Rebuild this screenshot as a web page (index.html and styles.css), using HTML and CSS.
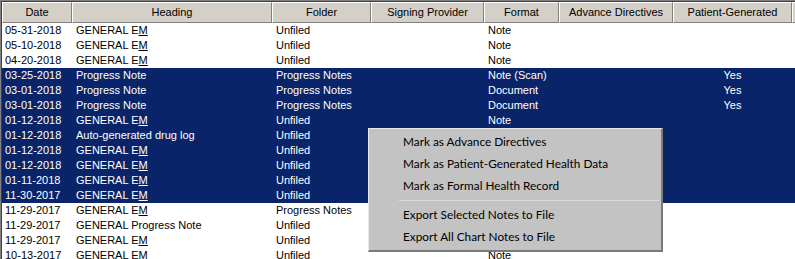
FILE: index.html
```html
<!DOCTYPE html>
<html lang="en">
<head>
    <meta charset="UTF-8">
    <title>Chart Notes</title>
    <link rel="stylesheet" href="styles.css">
</head>
<body>

    <div class="notes-list">
        <div class="row header">
            <div class="cell">Date</div>
            <div class="cell">Heading</div>
            <div class="cell">Folder</div>
            <div class="cell">Signing Provider</div>
            <div class="cell">Format</div>
            <div class="cell">Advance Directives</div>
            <div class="cell">Patient-Generated</div>
            <div class="cell filler"></div>
        </div>

        <div class="row"><div class="cell">05-31-2018</div><div class="cell">GENERAL E<u>M</u></div><div class="cell">Unfiled</div><div class="cell"></div><div class="cell">Note</div><div class="cell"></div><div class="cell yes"></div></div>
        <div class="row"><div class="cell">05-10-2018</div><div class="cell">GENERAL E<u>M</u></div><div class="cell">Unfiled</div><div class="cell"></div><div class="cell">Note</div><div class="cell"></div><div class="cell yes"></div></div>
        <div class="row"><div class="cell">04-20-2018</div><div class="cell">GENERAL E<u>M</u></div><div class="cell">Unfiled</div><div class="cell"></div><div class="cell">Note</div><div class="cell"></div><div class="cell yes"></div></div>
        <div class="row selected"><div class="cell">03-25-2018</div><div class="cell">Progress Note</div><div class="cell">Progress Notes</div><div class="cell"></div><div class="cell">Note (Scan)</div><div class="cell"></div><div class="cell yes">Yes</div></div>
        <div class="row selected"><div class="cell">03-01-2018</div><div class="cell">Progress Note</div><div class="cell">Progress Notes</div><div class="cell"></div><div class="cell">Document</div><div class="cell"></div><div class="cell yes">Yes</div></div>
        <div class="row selected"><div class="cell">03-01-2018</div><div class="cell">Progress Note</div><div class="cell">Progress Notes</div><div class="cell"></div><div class="cell">Document</div><div class="cell"></div><div class="cell yes">Yes</div></div>
        <div class="row selected"><div class="cell">01-12-2018</div><div class="cell">GENERAL E<u>M</u></div><div class="cell">Unfiled</div><div class="cell"></div><div class="cell">Note</div><div class="cell"></div><div class="cell yes"></div></div>
        <div class="row selected"><div class="cell">01-12-2018</div><div class="cell">Auto-generated drug log</div><div class="cell">Unfiled</div><div class="cell"></div><div class="cell"></div><div class="cell"></div><div class="cell yes"></div></div>
        <div class="row selected"><div class="cell">01-12-2018</div><div class="cell">GENERAL E<u>M</u></div><div class="cell">Unfiled</div><div class="cell"></div><div class="cell"></div><div class="cell"></div><div class="cell yes"></div></div>
        <div class="row selected"><div class="cell">01-12-2018</div><div class="cell">GENERAL E<u>M</u></div><div class="cell">Unfiled</div><div class="cell"></div><div class="cell"></div><div class="cell"></div><div class="cell yes"></div></div>
        <div class="row selected"><div class="cell">01-11-2018</div><div class="cell">GENERAL E<u>M</u></div><div class="cell">Unfiled</div><div class="cell"></div><div class="cell"></div><div class="cell"></div><div class="cell yes"></div></div>
        <div class="row selected"><div class="cell">11-30-2017</div><div class="cell">GENERAL E<u>M</u></div><div class="cell">Unfiled</div><div class="cell"></div><div class="cell"></div><div class="cell"></div><div class="cell yes"></div></div>
        <div class="row"><div class="cell">11-29-2017</div><div class="cell">GENERAL E<u>M</u></div><div class="cell">Progress Notes</div><div class="cell"></div><div class="cell"></div><div class="cell"></div><div class="cell yes"></div></div>
        <div class="row"><div class="cell">11-29-2017</div><div class="cell">GENERAL Progress Note</div><div class="cell">Unfiled</div><div class="cell"></div><div class="cell"></div><div class="cell"></div><div class="cell yes"></div></div>
        <div class="row"><div class="cell">11-29-2017</div><div class="cell">GENERAL E<u>M</u></div><div class="cell">Unfiled</div><div class="cell"></div><div class="cell"></div><div class="cell"></div><div class="cell yes"></div></div>
        <div class="row"><div class="cell">10-13-2017</div><div class="cell">GENERAL EM</div><div class="cell">Unfiled</div><div class="cell"></div><div class="cell">Note</div><div class="cell"></div><div class="cell yes"></div></div>

        <!-- context menu over the list -->
        <div class="context-menu">
            <div class="menu-item">Mark as Advance Directives</div>
            <div class="menu-item">Mark as Patient-Generated Health Data</div>
            <div class="menu-item">Mark as Formal Health Record</div>
            <div class="menu-separator"></div>
            <div class="menu-item">Export Selected Notes to File</div>
            <div class="menu-item">Export All Chart Notes to File</div>
        </div>
    </div>

</body>
</html>
```

FILE: styles.css
```css
/* Classic Windows list view */
body {
    margin: 0;
    background-color: #fff;
    font-family: "Liberation Sans", Arial, sans-serif;
    font-size: 11px;
    color: #000;
    overflow: hidden;
}

.notes-list {
    position: relative;
    height: 259px;
    border-top: 1px solid #808080;
    border-left: 1px solid #808080;
    box-shadow: inset 1px 1px 0 #404040;
    padding: 1px 0 0 1px;
    box-sizing: border-box;
}

.row {
    display: grid;
    grid-template-columns: 70px 200px 99px 113px 75px 114px 119px 1fr;
    height: 15px;
    line-height: 15px;
}

.cell {
    padding: 0 4px;
    white-space: nowrap;
    overflow: hidden;
}

.row .cell:first-child {
    padding-left: 3px;
}

.cell.yes {
    text-align: center;
}

.row.selected {
    background-color: #0a246a; /* navy selection */
    color: #fff;
}

.row.header {
    height: 21px;
    line-height: 19px;
    background-color: #d4d0c8;
}

.row.header .cell {
    text-align: center;
    border-top: 1px solid #fff;
    border-left: 1px solid #fff;
    border-right: 1px solid #808080;
    border-bottom: 1px solid #808080;
    padding: 0;
}

.row.header .cell.filler {
    border-right: none;
}

u {
    text-decoration: underline;
    text-underline-offset: 1px;
}

/* Popup menu */
.context-menu {
    position: absolute;
    left: 367px;
    top: 127px;
    width: 295px;
    box-sizing: border-box;
    padding: 2px;
    background-color: #c3c3c3;
    border-top: 1px solid #e8e8e8;
    border-left: 1px solid #e8e8e8;
    border-right: 2px solid #7a7a7a;
    border-bottom: 2px solid #7a7a7a;
    font-family: Lato, "Noto Sans", sans-serif;
    font-size: 11.8px;
    color: #000;
}

.menu-item {
    height: 22px;
    line-height: 22px;
    padding-left: 32px;
}

.menu-separator {
    height: 1px;
    margin: 3px 0 3px 28px;
    background-color: #dcdcdc;
}
```
